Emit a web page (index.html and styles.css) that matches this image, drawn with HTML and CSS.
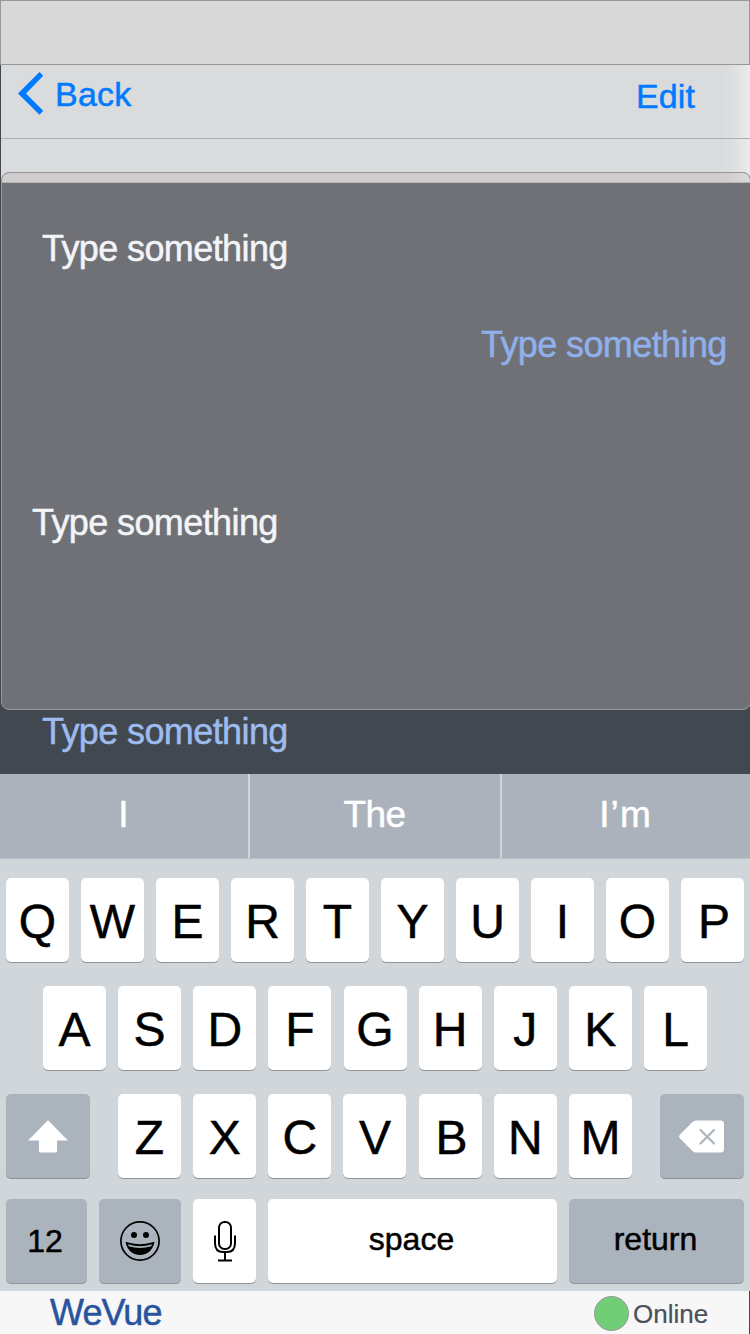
FILE: index.html
```html
<!DOCTYPE html>
<html lang="en">
<head>
<meta charset="utf-8">
<title>WeVue</title>
<link rel="stylesheet" href="styles.css">
</head>
<body>
<div class="screen">
  <div class="status"></div>
  <header class="nav">
    <a class="back"><svg width="26" height="44" viewBox="0 0 26 44"><path d="M0 21.500 21.500 0 25.200 3.800 8 21.500 25.200 38.800 21.500 42.800Z" fill="#007aff"/></svg><span>Back</span></a>
    <a class="edit">Edit</a>
  </header>
  <div class="subnav"></div>
  <main class="card">
    <div class="card-top"></div>
    <div class="card-body">
      <p class="msg m1">Type something</p>
      <p class="msg m2">Type something</p>
      <p class="msg m3">Type something</p>
    </div>
  </main>
  <div class="compose"><p class="msg m4">Type something</p></div>
  <div class="suggest"><span class="s1">I</span><span class="s2">The</span><span class="s3">I’m</span></div>
  <section class="keyboard">
    <div class="row r1"><b>Q</b><b>W</b><b>E</b><b>R</b><b>T</b><b>Y</b><b>U</b><b>I</b><b>O</b><b class="nudge">P</b></div>
    <div class="row r2"><b>A</b><b>S</b><b>D</b><b>F</b><b>G</b><b>H</b><b>J</b><b>K</b><b>L</b></div>
    <div class="row r3">
      <b class="grey wide"><svg width="40" height="33" viewBox="0 0 40 33"><path d="M20 0.200 40 20.500H29V31.500Q29 32.500 28 32.500H12Q11 32.500 11 31.500V20.500H0Z" fill="#fff"/></svg></b>
      <div class="row letters"><b>Z</b><b>X</b><b>C</b><b>V</b><b class="nudge">B</b><b>N</b><b>M</b></div>
      <b class="grey wide del"><svg width="45" height="33" viewBox="0 0 45 33"><path d="M17 .5H41.500Q45 .5 45 4V29Q45 32.500 41.500 32.500H17Q15 32.500 13.500 31L.8 18.300Q-.8 16.500.8 14.700L13.500 2Q15 .5 17 .5Z" fill="#fff"/><path d="M21.500 10 35 23.500M35 10 21.500 23.500" stroke="#acb4bd" stroke-width="2.200" stroke-linecap="round"/></svg></b>
    </div>
    <div class="row r4">
      <b class="grey num">12</b>
      <b class="grey emoji"><svg width="40" height="40" viewBox="0 0 40 40"><circle cx="20" cy="20" r="19.100" fill="none" stroke="#000" stroke-width="1.700"/><circle cx="14" cy="14" r="3"/><circle cx="26" cy="14" r="3"/><path d="M5.500 20.800Q20 25.600 34.500 20.800C33 29 27.500 34 20 34S7 29 5.500 20.800Z"/><path d="M8 23.300Q20 27.200 32 23.300L31.200 25.200Q20 28.800 8.800 25.200Z" fill="#acb4bd"/></svg></b>
      <b class="mic"><svg width="22" height="41" viewBox="0 0 22 41"><g fill="none" stroke="#000" stroke-width="2"><rect x="5" y="1" width="12" height="27" rx="5.500"/><path d="M1 14.500V22Q1 31 9 31H13Q21 31 21 22V14.500M11 31V39.500M4 39.500H18"/></g></svg></b>
      <b class="space">space</b>
      <b class="grey return">return</b>
    </div>
  </section>
  <footer class="footer"><span class="brand">WeVue</span><span class="dot"></span><span class="online">Online</span></footer>
</div>
</body>
</html>
```
FILE: styles.css
```css
* { box-sizing: border-box; }
body { margin: 0; background: #42484f; font-family: "Liberation Sans", Arial, sans-serif; }
.screen { width: 750px; height: 1334px; overflow: hidden; display: flex; flex-direction: column; -webkit-text-stroke: 0.5px currentColor; }
.screen > * { flex: none; }
svg { display: block; overflow: visible; }

.status { height: 65px; background: #d8d8d8; border: 1px solid #979797; }
.nav, .subnav { margin-left: 1px; background: linear-gradient(to right, #d9dbdc 720px, #dfe0e2 735px, #ebecee 749px); }
.nav { height: 74px; display: flex; justify-content: space-between; border-bottom: 1px solid #adafb1; color: #007aff; font-size: 34px; padding: 7px 55px 0 17px; }
.back { display: flex; gap: 11px; letter-spacing: 0.2px; }
.back span { line-height: 44px; }
.edit { line-height: 48px; letter-spacing: 0.1px; }
.subnav { height: 43px; }

.card { height: 538px; width: 750px; margin: -10px 0 0 1px; border: 1px solid #979797; border-radius: 8px; overflow: hidden; background: #6f7176; }
.card-top { height: 10px; background: linear-gradient(to right, #d1cdce 725px, #dddadb 749px); border-bottom: 1px solid #b5b5b5; }
.card-body { display: flex; flex-direction: column; padding-top: 46px; }
.msg { margin: 0; font-size: 36px; line-height: 40px; letter-spacing: -0.6px; color: #f3f4f8; }
.m1 { padding-left: 40px; }
.m2 { padding-left: 479px; margin-top: 56px; color: #8fb0ea; }
.m3 { padding-left: 30px; margin-top: 138px; }
.compose { height: 64px; padding: 2px 0 0 42px; }
.m4 { color: #9dbbee; }

.suggest { height: 84px; display: grid; grid-template-columns: 250px 252px 248px; background: #abb2bc; color: #fff; font-size: 37px; line-height: 81px; text-align: center; letter-spacing: -0.6px; }
.suggest span:not(:last-child) { border-right: 2px solid #d1d5da; }
.s1 { padding-right: 2px; }
.s2 { padding-right: 1px; }
.suggest .s3 { letter-spacing: 1.1px; padding-right: 1px; }

.keyboard { height: 433px; background: #d1d6da; padding: 19px 6px 0; border-top: 1px solid #bcc2c9; }
.row { display: flex; justify-content: space-between; }
.row b { width: 63px; height: 84px; border-radius: 5px; background: #fff; box-shadow: 0 1px 0 #8f9499; font-weight: 400; font-size: 48px; color: #000; display: flex; align-items: center; justify-content: center; padding-top: 3px; }
.row b.nudge { padding-left: 3px; }
.row b.grey { background: #abb4bd; }
.r2 { padding: 0 37px; margin-top: 24px; }
.r3 { margin-top: 24px; }
.row b.wide { width: 84px; padding: 0; }
.row b.del { padding-right: 2px; }
.letters { width: 514px; }
.r4 { margin-top: 21px; }
.row.r4 b { font-size: 32px; padding: 0; }
.row.r4 .num { width: 81px; padding-right: 3px; }
.row.r4 .emoji { width: 82px; }
.row.r4 .mic { width: 63px; padding-top: 1px; }
.row.r4 .space { width: 289px; padding-bottom: 4px; padding-right: 2px; }
.row.r4 .return { width: 175px; padding-bottom: 4px; padding-right: 2px; }

.footer { height: 43px; width: 749px; background: #f7f7f7; display: flex; padding-left: 50px; line-height: 43px; }
.brand { width: 545px; color: #29549d; font-size: 36px; letter-spacing: -0.9px; }
.dot { width: 35px; height: 35px; margin: 5px 4px 0 -1px; border: 1px solid #979797; border-radius: 50%; background: #72cd77; }
.online { color: #4a505a; font-size: 26px; line-height: 46px; -webkit-text-stroke-width: 0.2px; }
```
